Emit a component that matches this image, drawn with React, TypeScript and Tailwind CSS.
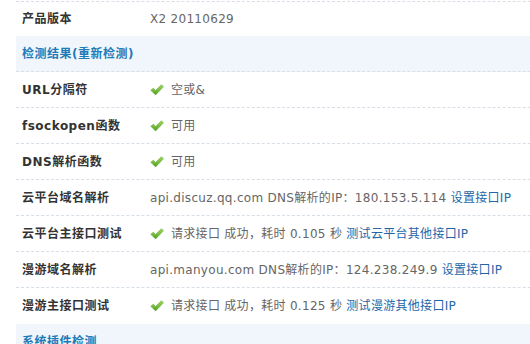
import React from 'react'

type Row =
  | { kind: 'head'; text: string; last?: boolean }
  | { kind: 'row'; label: string; value: React.ReactNode; last?: boolean }

function Check() {
  return (
    <svg width="14" height="12" viewBox="0 0 14 12" className="mr-[7px] shrink-0">
      <defs>
        <linearGradient id="ck" x1="0" y1="0" x2="0" y2="1">
          <stop offset="0" stopColor="#a6dc5c" />
          <stop offset="1" stopColor="#4f9e26" />
        </linearGradient>
      </defs>
      <path d="M0.8 6.2 L3.4 4.2 L5.6 6.6 L11.4 0.8 L13.4 2.8 L5.6 11 Z" fill="url(#ck)" stroke="#5da634" strokeWidth="0.6" strokeLinejoin="round" />
    </svg>
  )
}

const Link = ({ children }: { children: React.ReactNode }) => (
  <a className="text-[#2366a8] cursor-pointer">{children}</a>
)

const rows: Row[] = [
  { kind: 'row', label: '产品版本', value: 'X2 20110629', last: true },
  { kind: 'head', text: '检测结果(重新检测)' },
  { kind: 'row', label: 'URL分隔符', value: <><Check />空或&amp;</> },
  { kind: 'row', label: 'fsockopen函数', value: <><Check />可用</> },
  { kind: 'row', label: 'DNS解析函数', value: <><Check />可用</> },
  { kind: 'row', label: '云平台域名解析', value: <>api.discuz.qq.com DNS解析的IP：180.153.5.114&nbsp;<Link>设置接口IP</Link></> },
  { kind: 'row', label: '云平台主接口测试', value: <><Check />请求接口 成功，耗时 0.105 秒&nbsp;<Link>测试云平台其他接口IP</Link></> },
  { kind: 'row', label: '漫游域名解析', value: <>api.manyou.com DNS解析的IP：124.238.249.9&nbsp;<Link>设置接口IP</Link></> },
  { kind: 'row', label: '漫游主接口测试', value: <><Check />请求接口 成功，耗时 0.125 秒&nbsp;<Link>测试漫游其他接口IP</Link></>, last: true },
  { kind: 'head', text: '系统插件检测' },
]

export default function App() {
  return (
    <div className="w-[530px] h-[344px] overflow-hidden bg-white font-['DejaVu_Sans','Noto_Sans_CJK_SC',sans-serif] text-[12px]">
      <div className="ml-4 w-[600px]">
        {/* row above, only its bottom line shows */}
        <div className="h-[2px] border-b border-dashed border-[#d6dfe7]" />
        {rows.map((r, i) =>
          r.kind === 'head' ? (
            <div key={i} className="h-[36px] flex items-center pl-[6px] bg-[#f0f6fc] border-b border-dashed border-[#d6dfe7] font-bold text-[#1f7ab8] tracking-[0.5px]">
              {r.text}
            </div>
          ) : (
            <div key={i} className={`flex items-center ${i === 0 ? 'h-[34px]' : 'h-[36px] border-b border-dashed'} ${r.last ? 'border-transparent' : 'border-[#d6dfe7]'}`}>
              <div className="w-[128px] pl-[6px] font-bold text-[#333] tracking-[0.5px] whitespace-nowrap">{r.label}</div>
              <div className="pl-[6px] flex items-center text-[#666] tracking-[0.3px] whitespace-nowrap">{r.value}</div>
            </div>
          )
        )}
      </div>
    </div>
  )
}
